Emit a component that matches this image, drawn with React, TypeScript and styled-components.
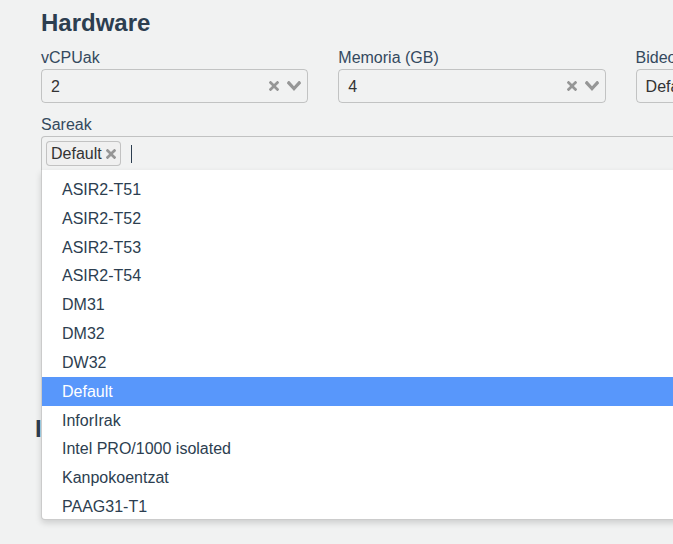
import React from "react";
import styled, { createGlobalStyle, css } from "styled-components";

const GlobalStyle = createGlobalStyle`
  html {
    overflow: hidden;
  }
  html, body {
    margin: 0;
    padding: 0;
    background: #f1f2f2;
  }
  body {
    font-family: "Liberation Sans", Arial, Helvetica, sans-serif;
    color: #2c3e50;
    min-height: 100vh;
  }
  * { box-sizing: border-box; }
`;

const Page = styled.div`
  padding: 9px 0 0 41px;
  width: 960px;
`;

const Heading = styled.h2<{ $shift?: number; $top?: number }>`
  margin: ${(p) => p.$top ?? 0}px 0 10px ${(p) => p.$shift ?? 0}px;
  font-size: 24px;
  line-height: 28px;
  font-weight: bold;
  color: #2c3e50;
`;

const Grid = styled.div`
  display: grid;
  grid-template-columns: repeat(3, 267.3px);
  column-gap: 30px;
  row-gap: 11px;
`;

const Field = styled.div<{ $wide?: boolean }>`
  display: flex;
  flex-direction: column;
  ${(p) => p.$wide && css`grid-column: 1 / -1;`}
`;

const Label = styled.label`
  font-size: 16px;
  line-height: 22px;
  color: #34495e;
`;

const Select = styled.div`
  position: relative;
  font-size: 16px;
`;

const Toggle = styled.div<{ $open?: boolean }>`
  display: flex;
  padding: 0 0 4px;
  border: 1px solid rgba(60, 60, 60, 0.26);
  border-radius: ${(p) => (p.$open ? "4px 4px 0 0" : "4px")};
  ${(p) => p.$open && css`border-bottom-color: transparent;`}
  background: none;
`;

const SelectedOptions = styled.div`
  display: flex;
  flex: 1 1 100%;
  flex-wrap: wrap;
  padding: 0 2px;
  position: relative;
`;

const Selected = styled.span<{ $tag?: boolean }>`
  display: flex;
  align-items: center;
  margin: 4px 2px 0;
  padding: 1px 4px 0;
  line-height: 21.4px;
  color: #333;
  border: 1px solid ${(p) => (p.$tag ? "rgba(60, 60, 60, 0.26)" : "transparent")};
  background: ${(p) => (p.$tag ? "#f0f0f0" : "transparent")};
  border-radius: 4px;
  white-space: nowrap;
`;

const IconButton = styled.button<{ $gap?: string }>`
  display: inline-flex;
  align-items: center;
  padding: 0;
  border: 0;
  background: none;
  margin: ${(p) => p.$gap ?? "0"};
  fill: rgba(60, 60, 60, 0.5);
  cursor: pointer;
`;

const Search = styled.div`
  flex-grow: 1;
  display: flex;
  align-items: center;
  margin: 4px 0 0;
  padding: 0 7px;
  border: 1px solid transparent;
  line-height: 1.4;
  min-height: 24.4px;
`;

const Caret = styled.span`
  display: inline-block;
  width: 1px;
  height: 18px;
  background: #2c3e50;
`;

const Actions = styled.div`
  display: flex;
  align-items: center;
  padding: 4px 6px 0 3px;
`;

const Indicator = styled.span`
  display: inline-flex;
  fill: rgba(60, 60, 60, 0.5);
`;

const Dropdown = styled.ul`
  position: absolute;
  top: calc(100% - 1px);
  left: 0;
  width: 100%;
  z-index: 1000;
  margin: 0;
  padding: 5px 0;
  list-style: none;
  max-height: 350px;
  overflow-y: hidden;
  border: 1px solid rgba(60, 60, 60, 0.26);
  border-top-style: none;
  border-radius: 0 0 4px 4px;
  box-shadow: 0 3px 6px 0 rgba(0, 0, 0, 0.15);
  background: #fff;
`;

const Option = styled.li<{ $active?: boolean }>`
  line-height: 1.42857143;
  padding: 4px 20px 2px;
  white-space: nowrap;
  color: ${(p) => (p.$active ? "#fff" : "#2c3e50")};
  background: ${(p) => (p.$active ? "#5897fb" : "transparent")};
`;

const ClearIcon = () => (
  <svg xmlns="http://www.w3.org/2000/svg" width="10" height="10">
    <path d="M6.895455 5l2.842897-2.842898c.348864-.348863.348864-.914488 0-1.263636L9.106534.261648c-.348864-.348864-.914489-.348864-1.263636 0L5 3.104545 2.157102.261648c-.348863-.348864-.914488-.348864-1.263636 0L.261648.893466c-.348864.348864-.348864.914489 0 1.263636L3.104545 5 .261648 7.842898c-.348864.348863-.348864.914488 0 1.263636l.631818.631818c.348864.348864.914773.348864 1.263636 0L5 6.895455l2.842898 2.842897c.348863.348864.914772.348864 1.263636 0l.631818-.631818c.348864-.348864.348864-.914489 0-1.263636L6.895455 5z" />
  </svg>
);

const OpenIcon = () => (
  <svg xmlns="http://www.w3.org/2000/svg" width="14" height="10">
    <path d="M9.211364 7.59931l4.48338-4.867229c.407008-.441854.407008-1.158247 0-1.60046l-.73712-.80023c-.407008-.441854-1.066904-.441854-1.474243 0L7 5.198617 2.51662.33139c-.407008-.441853-1.066904-.441853-1.474243 0l-.737121.80023c-.407008.441854-.407008 1.158248 0 1.600461l4.48338 4.867228L7 10l2.211364-2.40069z" />
  </svg>
);

const SingleSelect = ({ value }: { value: string }) => (
  <Select>
    <Toggle>
      <SelectedOptions>
        <Selected>{value}</Selected>
        <Search />
      </SelectedOptions>
      <Actions>
        <IconButton $gap="0 8px 0 0" aria-label="Clear">
          <ClearIcon />
        </IconButton>
        <Indicator>
          <OpenIcon />
        </Indicator>
      </Actions>
    </Toggle>
  </Select>
);

const networks = [
  "ASIR2-T51",
  "ASIR2-T52",
  "ASIR2-T53",
  "ASIR2-T54",
  "DM31",
  "DM32",
  "DW32",
  "Default",
  "InforIrak",
  "Intel PRO/1000 isolated",
  "Kanpokoentzat",
  "PAAG31-T1",
  "PAAG31-T2",
  "SMR1-T1",
];

export default function App() {
  return (
    <>
      <GlobalStyle />
      <Page>
        <Heading>Hardware</Heading>
        <Grid>
          <Field>
            <Label>vCPUak</Label>
            <SingleSelect value="2" />
          </Field>
          <Field>
            <Label>Memoria (GB)</Label>
            <SingleSelect value="4" />
          </Field>
          <Field>
            <Label>Bideo-txartela</Label>
            <SingleSelect value="Default" />
          </Field>
          <Field $wide>
            <Label>Sareak</Label>
            <Select>
              <Toggle $open>
                <SelectedOptions>
                  <Selected $tag>
                    Default
                    <IconButton $gap="0 0 0 4px" aria-label="Deselect">
                      <ClearIcon />
                    </IconButton>
                  </Selected>
                  <Search>
                    <Caret />
                  </Search>
                </SelectedOptions>
                <Actions>
                  <IconButton $gap="0 8px 0 0" aria-label="Clear">
                    <ClearIcon />
                  </IconButton>
                  <Indicator>
                    <OpenIcon />
                  </Indicator>
                </Actions>
              </Toggle>
              <Dropdown>
                {networks.map((n) => (
                  <Option key={n} $active={n === "Default"}>
                    {n}
                  </Option>
                ))}
              </Dropdown>
            </Select>
          </Field>
        </Grid>
        <Heading $shift={-6} $top={244}>
          Interfazeak
        </Heading>
      </Page>
    </>
  );
}
